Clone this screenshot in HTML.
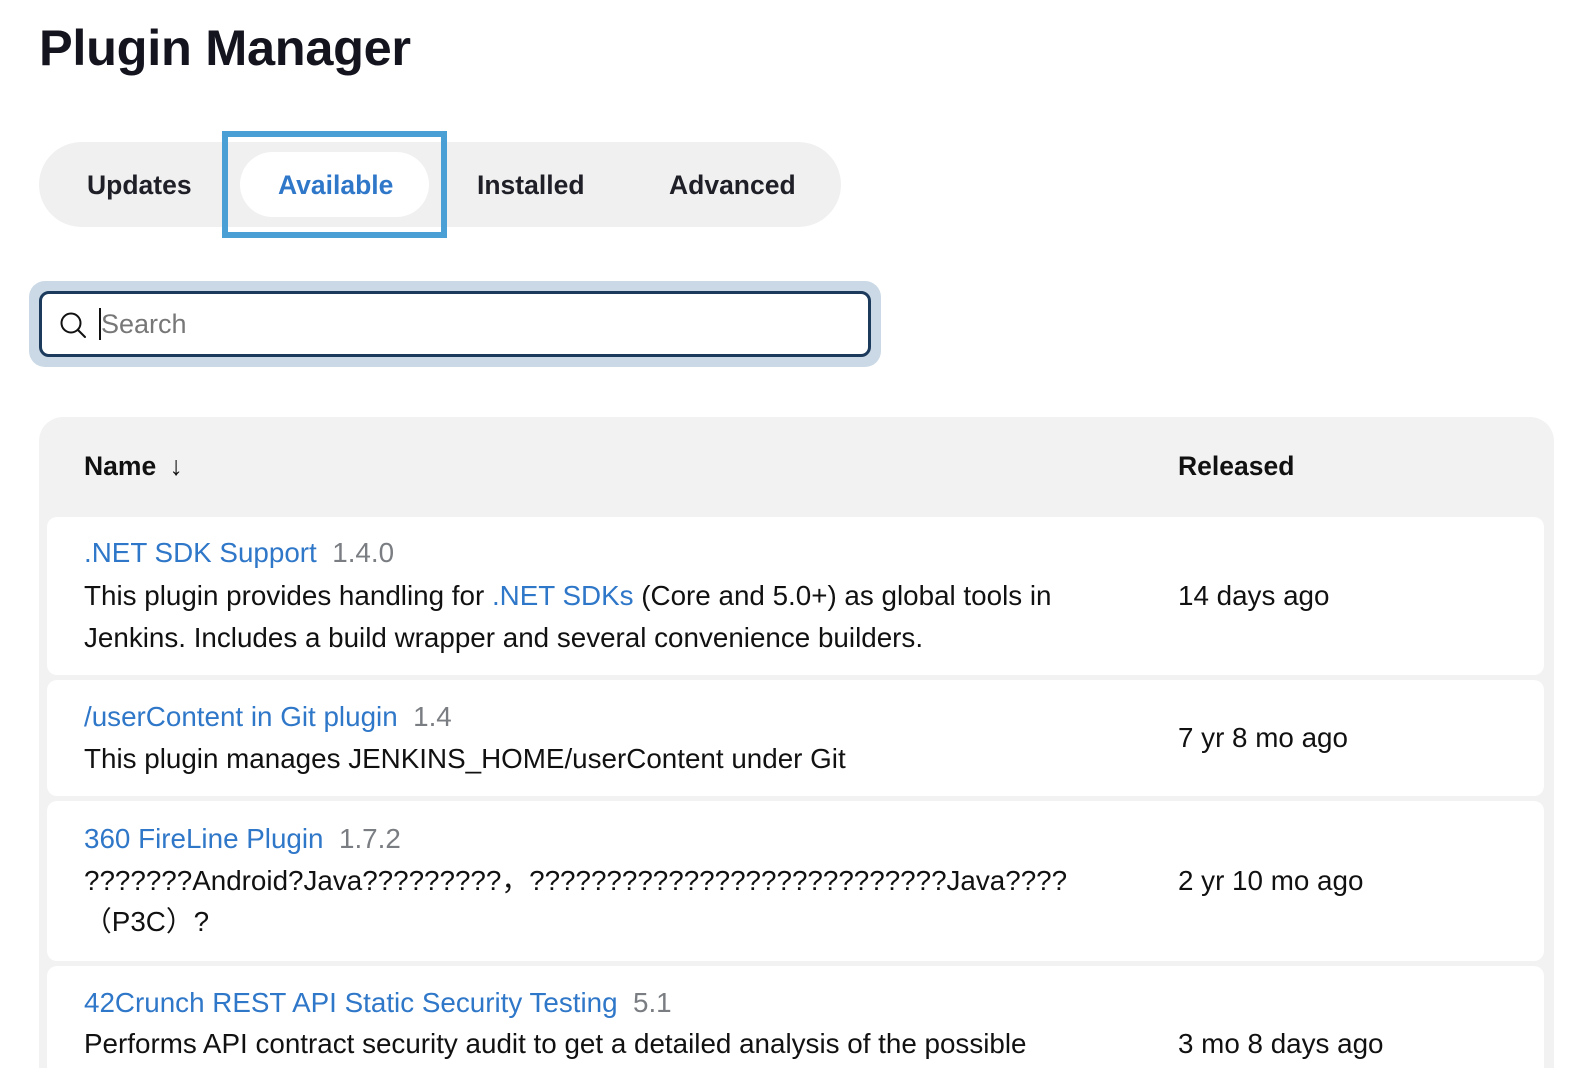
<!DOCTYPE html>
<html style="overflow:hidden;height:1068px"><head><meta charset="utf-8"><style>
*{margin:0;padding:0;box-sizing:border-box}
body{width:1582px;height:1068px;overflow:hidden;background:#fff;font-family:"Liberation Sans","Noto Sans CJK SC",sans-serif;color:#111;position:relative}
.a{position:absolute;white-space:nowrap}
h1{position:absolute;left:39px;top:18px;font-size:50.5px;font-weight:bold;color:#14141f;letter-spacing:-0.3px}
.tabs{position:absolute;left:39px;top:142px;width:802px;height:85px;background:#f0f0f0;border-radius:43px}
.tab{font-size:26.5px;font-weight:bold;color:#1f1f28;top:170px}
.sel{position:absolute;left:240px;top:152px;width:189px;height:65px;background:#fff;border-radius:33px}
.focus{position:absolute;left:222px;top:131px;width:225px;height:107px;border:6px solid #4a9fd5}
.halo{position:absolute;left:29px;top:281px;width:852px;height:86px;background:#cbd9e6;border-radius:16px}
.search{position:absolute;left:39px;top:291px;width:832px;height:66px;background:#fff;border:3px solid #1c3a5c;border-radius:10px}
.tbl{position:absolute;left:39px;top:417px;width:1515px;height:651px;background:#f2f2f2;border-radius:24px 24px 0 0}
.row{position:absolute;left:47px;width:1497px;background:#fff;border-radius:10px}
.t{font-size:27.8px;line-height:42px}
.lnk{color:#2f77c8}
.v{color:#7a7d82}
</style></head><body>
<h1>Plugin Manager</h1>
<div class="tabs"></div>
<div class="sel"></div>
<div class="focus"></div>
<div class="a tab" style="left:87px">Updates</div>
<div class="a tab" style="left:278px;color:#2f77c8">Available</div>
<div class="a tab" style="left:477px">Installed</div>
<div class="a tab" style="left:669px">Advanced</div>
<div class="halo"></div>
<div class="search"></div>
<svg class="a" style="left:58px;top:310px" width="30" height="30" viewBox="0 0 30 30"><circle cx="13" cy="13" r="9.5" fill="none" stroke="#111" stroke-width="2"/><line x1="20" y1="20" x2="27" y2="27" stroke="#111" stroke-width="2" stroke-linecap="round"/></svg>
<div class="a" style="left:99px;top:308px;width:2px;height:32px;background:#111"></div>
<div class="a" style="left:101px;top:309px;font-size:27px;color:#777">Search</div>
<div class="tbl"></div>
<div class="a" style="left:84px;top:451px;font-size:26.5px;font-weight:bold">Name <span style="font-weight:normal;margin-left:6px">↓</span></div>
<div class="a" style="left:1178px;top:451px;font-size:26.5px;font-weight:bold">Released</div>

<div class="row" style="top:517px;height:158px"></div>
<div class="a t" style="left:84px;top:532px"><span class="lnk">.NET SDK Support</span>&nbsp; <span class="v">1.4.0</span></div>
<div class="a t" style="left:84px;top:575px">This plugin provides handling for <span class="lnk">.NET SDKs</span> (Core and 5.0+) as global tools in</div>
<div class="a t" style="left:84px;top:617px">Jenkins. Includes a build wrapper and several convenience builders.</div>
<div class="a t" style="left:1178px;top:575px">14 days ago</div>

<div class="row" style="top:680px;height:116px"></div>
<div class="a t" style="left:84px;top:696px"><span class="lnk">/userContent in Git plugin</span>&nbsp; <span class="v">1.4</span></div>
<div class="a t" style="left:84px;top:738px">This plugin manages JENKINS_HOME/userContent under Git</div>
<div class="a t" style="left:1178px;top:717px">7 yr 8 mo ago</div>

<div class="row" style="top:801px;height:160px"></div>
<div class="a t" style="left:84px;top:818px"><span class="lnk">360 FireLine Plugin</span>&nbsp; <span class="v">1.7.2</span></div>
<div class="a t" style="left:84px;top:860px">???????Android?Java?????????，???????????????????????????Java????</div>
<div class="a t" style="left:84px;top:901px">（P3C）?</div>
<div class="a t" style="left:1178px;top:860px">2 yr 10 mo ago</div>

<div class="row" style="top:966px;height:102px;border-radius:10px 10px 0 0"></div>
<div class="a t" style="left:84px;top:982px"><span class="lnk">42Crunch REST API Static Security Testing</span>&nbsp; <span class="v">5.1</span></div>
<div class="a t" style="left:84px;top:1023px">Performs API contract security audit to get a detailed analysis of the possible</div>
<div class="a t" style="left:1178px;top:1023px">3 mo 8 days ago</div>
</body></html>
